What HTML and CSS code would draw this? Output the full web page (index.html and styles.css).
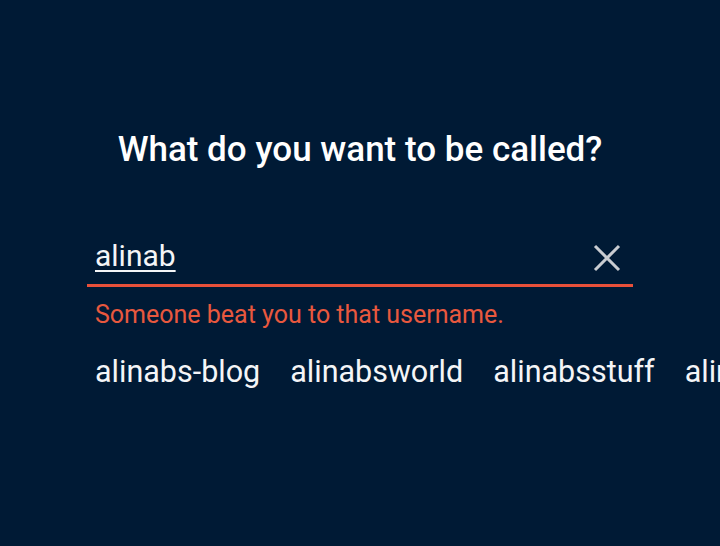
FILE: index.html
```html
<!DOCTYPE html>
<html>
<head>
<meta charset="utf-8">
<link rel="stylesheet" href="styles.css">
</head>
<body>
<main class="screen">
  <h1 class="title">What do you want to be called?</h1>
  <div class="field">
    <span class="value">alinab</span>
    <svg class="clear" width="28" height="28" viewBox="0 0 28 28"><path d="M2 2 L26 26 M26 2 L2 26" stroke="#c9ccd1" stroke-width="3" fill="none"/></svg>
  </div>
  <p class="error">Someone beat you to that username.</p>
  <div class="suggestions">
    <span class="sugg">alinabs-blog</span>
    <span class="sugg">alinabsworld</span>
    <span class="sugg">alinabsstuff</span>
    <span class="sugg">alinabsplace</span>
  </div>
</main>
</body>
</html>
```
FILE: styles.css
```css
html, body {
  margin: 0;
  padding: 0;
  background: #001a35;
  width: 720px;
  height: 546px;
  overflow: hidden;
}
.screen {
  font-family: Roboto, "Noto Sans", sans-serif;
  color: #ffffff;
  padding-top: 128px;
}
.title {
  margin: 0;
  text-align: center;
  font-size: 35px;
  font-weight: 500;
  line-height: 44px;
}
.field {
  margin: 64px 87px 0 87px;
  display: flex;
  align-items: center;
  justify-content: space-between;
  padding: 0 12px 8px 8px;
  border-bottom: 3px solid #e8503a;
  height: 40px;
}
.value {
  font-size: 30px;
  line-height: 34px;
  text-decoration: underline;
  text-decoration-thickness: 2px;
  text-underline-offset: 4px;
  color: #f4f5f7;
}
.clear {
  display: block;
  margin-top: 4px;
}
.error {
  margin: 13px 0 0 95px;
  font-size: 25px;
  line-height: 30px;
  color: #e8583e;
}
.suggestions {
  margin: 22px 0 0 95px;
  display: flex;
  gap: 30px;
  white-space: nowrap;
  font-size: 30.5px;
  line-height: 40px;
  color: #f4f5f7;
  overflow: hidden;
}
```
